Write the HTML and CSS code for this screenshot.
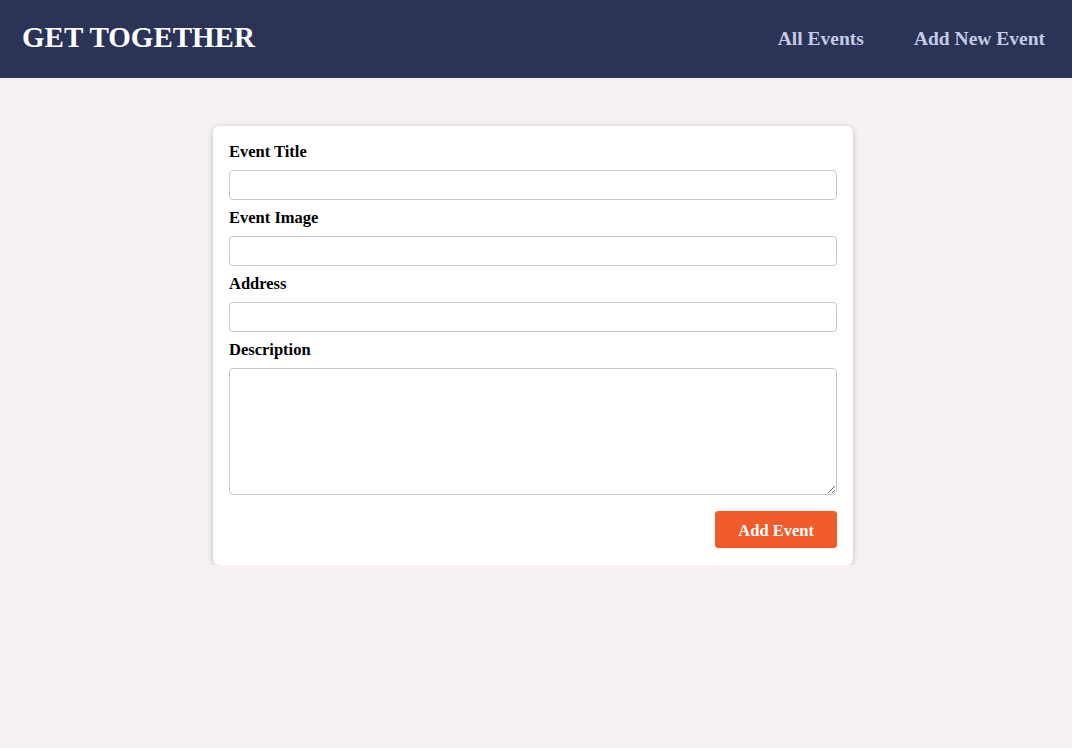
FILE: index.html
```html
<!DOCTYPE html>
<html lang="en">
<head>
<meta charset="utf-8">
<title>Get Together</title>
<link rel="stylesheet" href="styles.css">
</head>
<body>
<header class="header">
  <div class="logo">GET TOGETHER</div>
  <nav class="nav">
    <a href="#" class="nav-link">All Events</a>
    <a href="#" class="nav-link">Add New Event</a>
  </nav>
</header>
<main class="main">
  <div class="card">
    <form class="form">
      <div class="control">
        <label for="title">Event Title</label>
        <input type="text" id="title">
      </div>
      <div class="control">
        <label for="image">Event Image</label>
        <input type="url" id="image">
      </div>
      <div class="control">
        <label for="address">Address</label>
        <input type="text" id="address">
      </div>
      <div class="control">
        <label for="description">Description</label>
        <textarea id="description" rows="5"></textarea>
      </div>
      <div class="actions">
        <button type="button" class="btn">Add Event</button>
      </div>
    </form>
  </div>
</main>
</body>
</html>
```
FILE: styles.css
```css
* { box-sizing: border-box; }
html, body { margin: 0; padding: 0; }
body {
  font-family: "Liberation Serif", "DejaVu Serif", serif;
  background: #f7f1f1;
  color: #000;
  font-size: 16px;
}
.header {
  height: 78px;
  background: #2b3356;
  display: flex;
  align-items: center;
  justify-content: space-between;
  padding: 0 27px 0 22px;
}
.logo {
  color: #fff;
  font-size: 29px;
  font-weight: bold;
  margin-bottom: 4px;
}
.nav {
  display: flex;
  gap: 50px;
}
.nav-link {
  color: #c5cbe6;
  text-decoration: none;
  font-size: 19.5px;
  font-weight: bold;
}
.main {
  padding-top: 48px;
  padding-right: 6px;
}
.card {
  width: 640px;
  margin: 0 auto;
  background: #fff;
  border-radius: 6px;
  box-shadow: 0 1px 6px rgba(0,0,0,0.22);
  padding: 16px 16px 17px;
}
.control { margin-bottom: 8px; }
.control label {
  display: block;
  font-weight: bold;
  font-size: 16.5px;
  line-height: 20px;
  margin-bottom: 8px;
}
.control input,
.control textarea {
  display: block;
  width: 100%;
  font: inherit;
  line-height: 20px;
  padding: 4px;
  border: 1px solid #c8c8c8;
  border-radius: 4px;
  background: #fff;
}
.control input { height: 30px; }
.control textarea { height: 127px; resize: vertical; }
.actions {
  margin-top: 16px;
  display: flex;
  justify-content: flex-end;
}
.btn {
  font: inherit;
  font-weight: bold;
  font-size: 16.5px;
  line-height: 20px;
  color: #fff;
  background: #f15a29;
  border: 1px solid #f15a29;
  border-radius: 3px;
  padding: 9px 22px 6px;
  height: 37px;
  white-space: nowrap;
  cursor: pointer;
}
```
